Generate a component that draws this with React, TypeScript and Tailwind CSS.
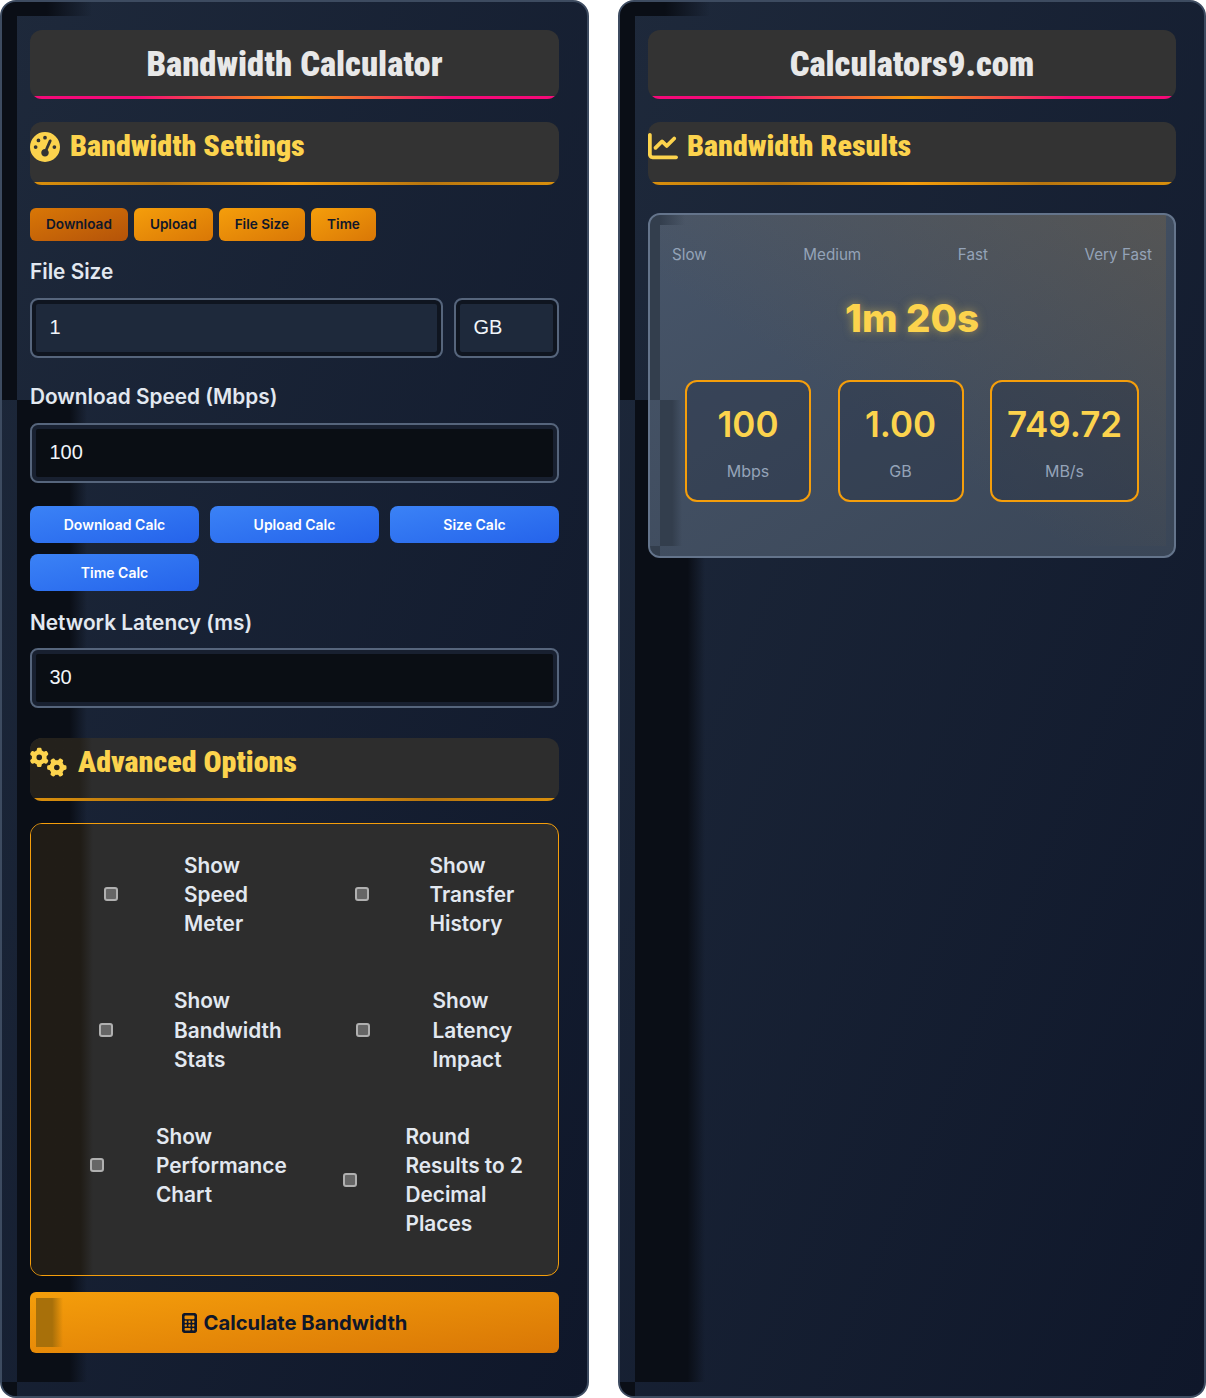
import React from 'react';
import { FaGaugeHigh, FaGears, FaChartLine, FaCalculator } from 'react-icons/fa6';

// dark bands along the panel's left side, they sit behind the panel content
function PanelShade() {
    return (
        <>
            <div className="absolute left-0 top-0 w-[15px] h-[398px] bg-[#0a0e16]" />
            <div className="absolute left-[15px] top-0 w-[75px] h-[14px] bg-gradient-to-r from-[#0a0e16] from-40% to-transparent" />
            <div className="absolute left-[15px] top-[398px] bottom-[14px] w-[70px] bg-gradient-to-r from-[#0a0e16] from-75% to-transparent" />
            <div className="absolute left-0 bottom-0 w-[15px] h-[14px] bg-[#0a0e16]" />
        </>
    );
}

function CardShade() {
    return (
        <>
            <div className="absolute left-[10px] right-[8px] top-0 bottom-[10px] bg-gradient-to-tr from-transparent from-40% to-[#7a6340]/35" />
            <div className="absolute left-0 top-0 w-[10px] h-[185px] bg-[#333e4d]" />
            <div className="absolute left-[10px] top-0 w-[25px] h-[10px] bg-gradient-to-r from-[#333e4d] to-transparent" />
            <div className="absolute left-[10px] top-[185px] bottom-[10px] w-[22px] bg-gradient-to-r from-[#333e4d] from-55% to-transparent" />
            <div className="absolute left-0 bottom-0 w-[10px] h-[10px] bg-[#333e4d]" />
        </>
    );
}

function MainTitle({ children }: { children: React.ReactNode }) {
    return (
        <div className="relative h-[69px] rounded-xl bg-[#333333] flex items-center justify-center overflow-hidden">
            <h1 className="font-['Roboto'] font-black text-[34.6px] text-[#e8e8e8] [font-stretch:75%] leading-none">{children}</h1>
            <div className="absolute left-[2px] right-[2px] bottom-0 h-[3px] rounded-b-xl bg-linear-to-r/srgb from-[#f50a78] from-20% via-[#f59e0b] via-50% to-[#f50a78] to-80%" />
        </div>
    );
}

function SectionTitle({ icon, children, className, tint }: { icon: React.ReactNode; children: React.ReactNode; className: string; tint?: boolean }) {
    return (
        <div className={`relative h-[63px] rounded-xl overflow-hidden flex items-start pt-[8px] ${className}`}>
            {tint && <div className="absolute left-0 top-0 bottom-0 w-[62px] bg-gradient-to-r from-[#24211c] from-80% to-transparent" />}
            <div className="relative">{icon}</div>
            <h2 className="relative font-['Roboto'] font-black text-[30px] text-[#fcd34d] [font-stretch:75%] leading-[32px]">{children}</h2>
            <div className="absolute left-[2px] right-[2px] bottom-0 h-[3px] rounded-b-xl bg-[linear-gradient(90deg,#d98f0c,#b8760f_25%,#f59e0b_50%,#b8760f_75%,#d98f0c)]" />
        </div>
    );
}

function Field({ value, dark, className }: { value: string; dark?: boolean; className?: string }) {
    return (
        <div className={`h-[60px] rounded-lg border-2 border-[#56657c] flex items-center pl-[17.5px] pb-[2px] font-['Liberation_Sans'] text-[20px] text-[#f1f5f9] ${dark ? 'bg-[#0a0e14] shadow-[inset_0_0_0_4px_#182030]' : 'bg-[#1e293b] shadow-[inset_0_0_0_4px_#0f1520]'} ${className ?? ''}`}>
            {value}
        </div>
    );
}

function Tab({ label, active }: { label: string; active?: boolean }) {
    return (
        <div className={`h-[33px] px-4 rounded-md flex items-center text-[13.6px] font-semibold text-[#0f172a] bg-gradient-to-br ${active ? 'from-[#d97706] to-[#b45309]' : 'from-[#f59e0b] to-[#d97706]'}`}>
            {label}
        </div>
    );
}

function CalcButton({ label }: { label: string }) {
    return (
        <div className="h-[37px] rounded-lg flex items-center justify-center text-[14px] font-semibold text-white bg-gradient-to-br from-[#3b82f6] to-[#2563eb]">
            {label}
        </div>
    );
}

function Option({ lines, className, boxClass }: { lines: string[]; className: string; boxClass: string }) {
    return (
        <div className={`relative flex items-center ${className}`}>
            <div className={`w-[14px] h-[14px] mb-[1px] shrink-0 rounded-[3px] bg-[#666666] border-2 border-[#b0b0b0] ${boxClass}`} />
            <div className="text-[20.8px] leading-[29.12px] font-semibold text-[#e2e8f0]">
                {lines.map((l) => <div key={l}>{l}</div>)}
            </div>
        </div>
    );
}

function Stat({ value, unit, className }: { value: string; unit: string; className: string }) {
    return (
        <div className={`h-[122px] rounded-xl border-2 border-[#f59e0b] bg-[#1e293b]/30 flex flex-col items-center pt-[20px] ${className}`}>
            <div className="text-[35px] leading-[44px] font-semibold text-[#fcd34d]">{value}</div>
            <div className="text-[16px] leading-[24px] text-[#94a3b8] mt-[13px]">{unit}</div>
        </div>
    );
}

export default function App() {
    return (
        <div className="w-[1206px] h-[1398px] flex gap-[29px] bg-white font-['Inter',sans-serif]">
            {/* Left panel */}
            <div className="relative w-[589px] h-[1398px] rounded-2xl border-2 border-[#3d4b60] bg-gradient-to-br from-[#1e293b] to-[#0f172a] overflow-hidden">
                <PanelShade />
                <div className="relative px-[28px] pt-[28px]">
                    <MainTitle>Bandwidth Calculator</MainTitle>
                    <SectionTitle
                        className="mt-[23px] bg-[#333333]"
                        icon={<FaGaugeHigh className="text-[#fcd34d] w-[30px] h-[30px] mt-[2px] mr-[10px]" />}
                    >
                        Bandwidth Settings
                    </SectionTitle>

                    <div className="flex gap-[6px] mt-[23px]">
                        <Tab label="Download" active />
                        <Tab label="Upload" />
                        <Tab label="File Size" />
                        <Tab label="Time" />
                    </div>

                    <div className="mt-[17px] text-[20.8px] leading-[28px] font-semibold text-[#e2e8f0]">File Size</div>
                    <div className="flex gap-[11px] mt-[12px]">
                        <Field value="1" className="flex-1" />
                        <Field value="GB" className="w-[105px]" />
                    </div>

                    <div className="mt-[25px] text-[20.8px] leading-[28px] font-semibold text-[#e2e8f0]">Download Speed (Mbps)</div>
                    <Field value="100" dark className="mt-[12px]" />

                    <div className="grid grid-cols-3 gap-[11px] mt-[23px]">
                        <CalcButton label="Download Calc" />
                        <CalcButton label="Upload Calc" />
                        <CalcButton label="Size Calc" />
                        <CalcButton label="Time Calc" />
                    </div>

                    <div className="mt-[18px] text-[20.8px] leading-[28px] font-semibold text-[#e2e8f0]">Network Latency (ms)</div>
                    <Field value="30" dark className="mt-[11px]" />

                    <SectionTitle
                        tint
                        className="mt-[30px] bg-[#2d2d2d]"
                        icon={<FaGears className="text-[#fcd34d] w-[37px] h-[32px] mr-[11px]" />}
                    >
                        Advanced Options
                    </SectionTitle>

                    <div className="relative mt-[22px] h-[453px] rounded-xl border border-[#f59e0b] bg-[#2d2d2d] grid grid-cols-2 content-start pt-[27px] gap-y-[48px] overflow-hidden">
                        <div className="absolute left-0 top-0 bottom-0 w-[62px] bg-gradient-to-r from-[#201c16] from-80% to-transparent" />
                        <Option lines={['Show', 'Speed', 'Meter']} className="pl-[73px]" boxClass="mr-[66px]" />
                        <Option lines={['Show', 'Transfer', 'History']} className="pl-[60px]" boxClass="mr-[61px]" />
                        <Option lines={['Show', 'Bandwidth', 'Stats']} className="pl-[68px]" boxClass="mr-[61px]" />
                        <Option lines={['Show', 'Latency', 'Impact']} className="pl-[61px]" boxClass="mr-[63px]" />
                        <Option lines={['Show', 'Performance', 'Chart']} className="self-start pl-[59px]" boxClass="mr-[52px]" />
                        <Option lines={['Round', 'Results to 2', 'Decimal', 'Places']} className="pl-[48px]" boxClass="mr-[49px]" />
                    </div>

                    <div className="relative mt-[16px] h-[61px] rounded-md bg-gradient-to-br from-[#f59e0b] to-[#d97706] flex items-center justify-center gap-[7px] pt-[1px] text-[20.2px] font-bold text-[#0f172a] overflow-hidden">
                        <div className="absolute left-[6px] top-[6px] bottom-[6px] w-[27px] bg-gradient-to-r from-[#a8700a] from-60% to-transparent" />
                        <FaCalculator className="relative w-[15px] h-[20px]" />
                        <span className="relative">Calculate Bandwidth</span>
                    </div>
                </div>
            </div>

            {/* Right panel */}
            <div className="relative w-[588px] h-[1398px] rounded-2xl border-2 border-[#3d4b60] bg-gradient-to-br from-[#1e293b] to-[#0f172a] overflow-hidden">
                <PanelShade />
                <div className="relative px-[28px] pt-[28px]">
                    <MainTitle>Calculators9.com</MainTitle>
                    <SectionTitle
                        className="mt-[23px] bg-[#333333]"
                        icon={<FaChartLine className="text-[#fcd34d] w-[30px] h-[30px] mt-[1px] mr-[9px]" />}
                    >
                        Bandwidth Results
                    </SectionTitle>

                    <div className="relative mt-[28px] h-[345px] rounded-xl border-2 border-[#64748b] bg-gradient-to-br from-[#475569] to-[#3a4657] overflow-hidden">
                        <CardShade />
                        <div className="relative px-[22px] pt-[29px]">
                            <div className="flex justify-between text-[15.2px] leading-[22px] text-[#94a3b8]">
                                <span>Slow</span>
                                <span>Medium</span>
                                <span>Fast</span>
                                <span>Very Fast</span>
                            </div>
                            <div className="mt-[26px] text-center text-[38.4px] leading-[52px] font-extrabold text-[#fcd34d] [text-shadow:0_0_10px_rgba(252,211,77,0.5)]">1m 20s</div>
                            <div className="flex justify-center gap-[26.5px] mt-[36px]">
                                <Stat value="100" unit="Mbps" className="w-[126px]" />
                                <Stat value="1.00" unit="GB" className="w-[126px]" />
                                <Stat value="749.72" unit="MB/s" className="w-[149px]" />
                            </div>
                        </div>
                    </div>
                </div>
            </div>
        </div>
    );
}
